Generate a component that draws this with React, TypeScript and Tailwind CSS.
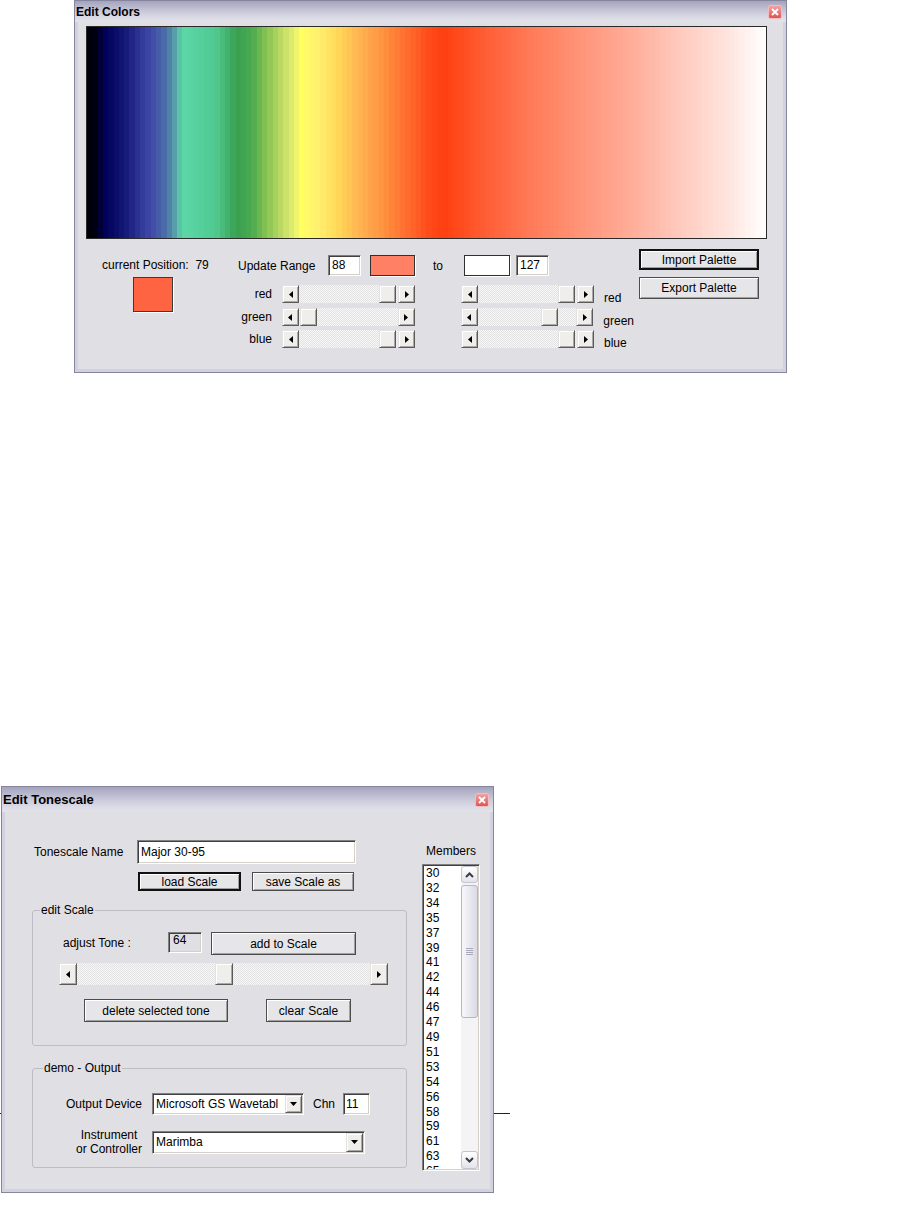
import React from 'react';

// palette key colours, keyed by x position in the reference strip
const STOPS: [number, string][] = [
  [86, '#000008'], [94, '#000010'], [104, '#000058'], [124, '#141878'], [140, '#303898'],
  [150, '#4048a8'], [165, '#4a70a8'], [174, '#58a0a8'], [182, '#5cd8a8'], [215, '#50c890'],
  [236, '#38a050'], [251, '#4aaa50'], [264, '#80c050'], [284, '#c8e068'], [294, '#e8f070'],
  [301, '#ffff60'], [317, '#fff070'], [337, '#ffd858'], [361, '#ffb050'], [384, '#ff9040'],
  [404, '#ff7030'], [431, '#ff4818'], [443, '#ff4010'], [480, '#ff5a30'], [530, '#ff7a58'],
  [580, '#ff9478'], [630, '#ffac98'], [680, '#ffcabe'], [730, '#ffe6e0'], [766, '#ffffff'],
];

const rgb = (h: string) => [1, 3, 5].map((i) => parseInt(h.slice(i, i + 2), 16));

function colorAt(x: number) {
  for (let i = 0; i < STOPS.length - 1; i++) {
    const [x0, c0] = STOPS[i];
    const [x1, c1] = STOPS[i + 1];
    if (x >= x0 && x <= x1) {
      const t = (x - x0) / (x1 - x0);
      const a = rgb(c0);
      const b = rgb(c1);
      return `rgb(${a.map((v, k) => Math.round(v + (b[k] - v) * t)).join(',')})`;
    }
  }
  return x < STOPS[0][0] ? STOPS[0][1] : '#ffffff';
}

const BANDS = 128;
const paletteBg =
  'linear-gradient(to right,' +
  Array.from({ length: BANDS }, (_, i) => {
    const c = colorAt(86 + ((i + 0.5) * 680) / BANDS);
    return `${c} ${((i * 100) / BANDS).toFixed(3)}% ${(((i + 1) * 100) / BANDS).toFixed(3)}%`;
  }).join(',') +
  ')';

const SUNKEN =
  'border border-t-[#808080] border-l-[#808080] border-r-white border-b-white shadow-[inset_1px_1px_0_#404040,inset_-1px_-1px_0_#d4d0c8]';
const RAISED =
  'bg-[#efeeea] border border-t-[#e2e2e2] border-l-[#e2e2e2] border-r-[#5a5a5a] border-b-[#5a5a5a] shadow-[inset_1px_1px_0_#ffffff,inset_-1px_-1px_0_#a8a8a8]';

const CloseBox = () => (
  <div className="w-[14px] h-[14px] rounded-[2px] border border-[#f4bcbc] bg-[linear-gradient(to_bottom,#f3a3a3,#dc5656)] flex items-center justify-center">
    <svg width="8" height="8" viewBox="0 0 8 8">
      <path d="M1 1L7 7M7 1L1 7" stroke="#ffffff" strokeWidth="1.8" />
    </svg>
  </div>
);

const Window: React.FC<{ title: string; titleCls: string; className: string; children: React.ReactNode }> = ({
  title,
  titleCls,
  className,
  children,
}) => (
  <div className={`flex flex-col border border-[#85859f] bg-[#d2d2de] ${className}`}>
    <div
      className={`flex items-center justify-between pl-[1px] pr-[4px] bg-[linear-gradient(to_bottom,#a3a3bd_0%,#c2c2d5_40%,#dcdce7_80%,#e2e2eb_100%)] ${titleCls}`}
    >
      <span className="font-bold">{title}</span>
      <CloseBox />
    </div>
    <div className="flex-1 flex px-[3px] pb-[3px]">
      <div className="flex-1 bg-[#e0dfe3]">{children}</div>
    </div>
  </div>
);

const Btn: React.FC<{ className: string; def?: boolean; children: React.ReactNode }> = ({ className, def, children }) => (
  <div
    className={`flex items-center justify-center bg-[#e6e5e8] shadow-[inset_1px_1px_0_#ffffff,inset_-1px_-1px_0_#a0a0a0] ${
      def ? 'border-2 border-[#111111]' : 'border border-[#4c4c4c]'
    } ${className}`}
  >
    {children}
  </div>
);

const ArrowL = () => (
  <svg width="4" height="7" viewBox="0 0 4 7">
    <polygon points="4,0 0,3.5 4,7" fill="#000" />
  </svg>
);
const ArrowR = () => (
  <svg width="4" height="7" viewBox="0 0 4 7">
    <polygon points="0,0 4,3.5 0,7" fill="#000" />
  </svg>
);

const HScroll: React.FC<{ className: string; btn: string; thumb: string; pos: number }> = ({ className, btn, thumb, pos }) => (
  <div className={`flex ${className}`}>
    <div className={`${RAISED} ${btn} h-full flex items-center justify-center`}>
      <ArrowL />
    </div>
    <div className="flex-1 h-full flex bg-[repeating-conic-gradient(#f7f7f7_0%_25%,#e2e2e2_0%_50%)] bg-[length:2px_2px]">
      <div className={`${RAISED} ${thumb} h-full`} style={{ marginLeft: pos }} />
    </div>
    <div className={`${RAISED} ${btn} h-full flex items-center justify-center`}>
      <ArrowR />
    </div>
  </div>
);

const DownTri = () => (
  <svg width="7" height="4" viewBox="0 0 7 4">
    <polygon points="0,0 7,0 3.5,4" fill="#000" />
  </svg>
);

const Combo: React.FC<{ className: string; text: string }> = ({ className, text }) => (
  <div className={`flex bg-white p-[1px] ${SUNKEN} ${className}`}>
    <span className="flex-1 overflow-hidden whitespace-nowrap pl-[2px] flex items-center">{text}</span>
    <div className={`${RAISED} w-[17px] h-full flex items-center justify-center`}>
      <DownTri />
    </div>
  </div>
);

const Group: React.FC<{ className: string; legend: string; legendCls: string; children: React.ReactNode }> = ({
  className,
  legend,
  legendCls,
  children,
}) => (
  <div className={`relative flex flex-col border border-[#bdbdc6] rounded-[3px] ${className}`}>
    <span className={`absolute -top-[8px] px-[1px] bg-[#e0dfe3] leading-[14px] ${legendCls}`}>{legend}</span>
    {children}
  </div>
);

const Chevron = ({ up }: { up?: boolean }) => (
  <svg width="9" height="6" viewBox="0 0 9 6">
    <polyline points={up ? '1,5 4.5,1.5 8,5' : '1,1 4.5,4.5 8,1'} fill="none" stroke="#3a3a4a" strokeWidth="2" />
  </svg>
);

const XP_BTN =
  'rounded-[3px] border border-[#c3c3d3] bg-[linear-gradient(to_bottom,#ffffff,#e3e3eb)] flex items-center justify-center';

const MEMBERS = ['30', '32', '34', '35', '37', '39', '41', '42', '44', '46', '47', '49', '51', '53', '54', '56', '58', '59', '61', '63', '65'];

const MembersList = () => (
  <div className={`mt-[6px] w-[58px] h-[307px] bg-white flex p-[1px] ${SUNKEN}`}>
    <div className="flex-1 overflow-hidden pl-[2px] leading-[14.9px]">
      {MEMBERS.map((m) => (
        <div key={m}>{m}</div>
      ))}
    </div>
    <div className="w-[17px] flex flex-col bg-[#f4f4f7]">
      <div className={`h-[17px] ${XP_BTN}`}>
        <Chevron up />
      </div>
      <div className="flex-1 flex flex-col">
        <div className="mt-[2px] h-[133px] rounded-[3px] border border-[#b6b6c6] bg-[linear-gradient(to_right,#f7f7fb,#dadae4)] flex flex-col items-center justify-center gap-[1px]">
          <div className="w-[7px] h-px bg-[#a9a9b9]" />
          <div className="w-[7px] h-px bg-[#a9a9b9]" />
          <div className="w-[7px] h-px bg-[#a9a9b9]" />
          <div className="w-[7px] h-px bg-[#a9a9b9]" />
        </div>
      </div>
      <div className={`h-[18px] ${XP_BTN}`}>
        <Chevron />
      </div>
    </div>
  </div>
);

const SLIDERS = [
  { label: 'red', l: 80, r: 80, mt: 'mt-[9px]' },
  { label: 'green', l: 1, r: 63, mt: 'mt-[5px]' },
  { label: 'blue', l: 80, r: 80, mt: 'mt-[4px]' },
];

const EditColors = () => (
  <Window title="Edit Colors" titleCls="h-[21px] text-[12px]" className="ml-[74px] w-[713px] h-[373px]">
    <div className="flex flex-col">
      <div
        className="ml-[8px] mt-[4px] w-[681px] h-[213px] border border-[#2a2a2a]"
        style={{ background: paletteBg }}
      />
      <div className="flex mt-[10px] ml-[8px]">
        <div className="w-[146px] pt-[6px] flex flex-col">
          <div className="h-[21px] leading-[21px] pl-[16px] whitespace-pre">current Position:  79</div>
          <div className="ml-[47px] mt-[1px] w-[40px] h-[35px] bg-[#ff6442] border border-[#3a3a3a] shadow-[1px_1px_0_#ffffff]" />
        </div>
        <div className="ml-[6px] w-[396px] pt-[6px] flex flex-col">
          <div className="flex items-center h-[21px]">
            <span className="w-[90px]">Update Range</span>
            <div className={`w-[33px] h-[21px] bg-white pl-[3px] leading-[19px] ${SUNKEN}`}>88</div>
            <div className="ml-[9px] w-[45px] h-[21px] bg-[#ff8064] border border-[#303030] shadow-[1px_1px_0_#ffffff]" />
            <span className="w-[49px] pl-[18px]">to</span>
            <div className="w-[46px] h-[21px] bg-white border border-[#303030] shadow-[1px_1px_0_#ffffff]" />
            <div className={`ml-[6px] w-[33px] h-[21px] bg-white pl-[3px] leading-[19px] ${SUNKEN}`}>127</div>
          </div>
          {SLIDERS.map((s) => (
            <div key={s.label} className={`flex items-start h-[18px] ${s.mt}`}>
              <span className="w-[34px] text-right leading-[18px]">{s.label}</span>
              <HScroll className="ml-[10px] w-[133px] h-[18px]" btn="w-[17px]" thumb="w-[17px]" pos={s.l} />
              <HScroll className="ml-[46px] w-[133px] h-[18px]" btn="w-[17px]" thumb="w-[17px]" pos={s.r} />
              <span className="ml-[10px] pt-[4px] leading-[18px]">{s.label}</span>
            </div>
          ))}
        </div>
        <div className="ml-[5px] w-[120px] flex flex-col">
          <Btn def className="h-[21px]">
            Import Palette
          </Btn>
          <Btn className="mt-[7px] h-[22px]">Export Palette</Btn>
        </div>
      </div>
    </div>
  </Window>
);

const EditTonescale = () => (
  <div className="relative w-[510px]">
    <div className="absolute left-0 top-[327px] w-[510px] h-px bg-[#222222]" />
    <Window title="Edit Tonescale" titleCls="h-[25px] text-[13px]" className="relative z-10 ml-[1px] w-[493px] h-[407px]">
      <div className="flex">
        <div className="w-[407px] flex flex-col">
          <div className="flex items-center mt-[28px] h-[24px]">
            <span className="pl-[29px] w-[132px]">Tonescale Name</span>
            <div className={`w-[219px] h-[24px] bg-white pl-[3px] flex items-center ${SUNKEN}`}>Major 30-95</div>
          </div>
          <div className="flex mt-[8px] ml-[133px]">
            <Btn def className="w-[103px] h-[19px]">
              load Scale
            </Btn>
            <Btn className="ml-[11px] w-[102px] h-[19px]">save Scale as</Btn>
          </div>
          <Group className="mt-[19px] ml-[27px] w-[375px] h-[136px]" legend="edit Scale" legendCls="left-[7px]">
            <div className="flex items-start mt-[21px]">
              <span className="w-[135px] pl-[30px] leading-[23px]">adjust Tone :</span>
              <div className={`w-[34px] h-[21px] bg-[#e0dfe3] pl-[4px] leading-[15px] ${SUNKEN}`}>64</div>
              <Btn className="ml-[9px] w-[145px] h-[23px]">add to Scale</Btn>
            </div>
            <HScroll className="mt-[8px] ml-[26px] w-[329px] h-[22px]" btn="w-[18px]" thumb="w-[18px]" pos={138} />
            <div className="flex mt-[14px]">
              <Btn className="ml-[51px] w-[144px] h-[23px]">delete selected tone</Btn>
              <Btn className="ml-[38px] w-[85px] h-[23px]">clear Scale</Btn>
            </div>
          </Group>
          <Group className="mt-[22px] ml-[27px] w-[375px] h-[100px]" legend="demo - Output" legendCls="left-[10px]">
            <div className="flex items-center mt-[24px] h-[22px]">
              <span className="w-[109px] text-right">Output Device</span>
              <Combo className="ml-[10px] w-[152px] h-[22px]" text="Microsoft GS Wavetabl" />
              <span className="ml-[9px] w-[30px]">Chn</span>
              <div className={`w-[27px] h-[22px] bg-white pl-[2px] leading-[20px] ${SUNKEN}`}>11</div>
            </div>
            <div className="flex items-center mt-[13px]">
              <div className="w-[109px] flex justify-end">
                <div className="text-center leading-[14px]">
                  Instrument
                  <br />
                  or Controller
                </div>
              </div>
              <Combo className="ml-[10px] w-[213px] h-[23px]" text="Marimba" />
            </div>
          </Group>
        </div>
        <div className="ml-[10px] w-[58px] flex flex-col items-center">
          <div className="mt-[32px] leading-[14px]">Members</div>
          <MembersList />
        </div>
      </div>
    </Window>
  </div>
);

export default function App() {
  return (
    <div className="w-[923px] min-h-[1229px] bg-white text-black text-[12px] font-['Liberation_Sans',Arial,sans-serif]">
      <EditColors />
      <div className="mt-[413px]">
        <EditTonescale />
      </div>
    </div>
  );
}
